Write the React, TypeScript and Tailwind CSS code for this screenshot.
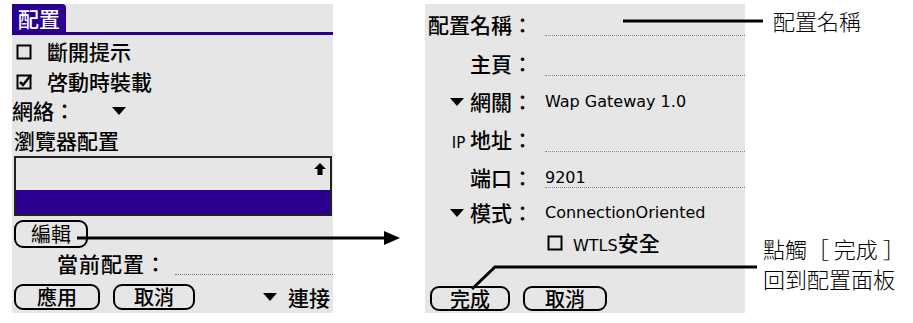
import React from "react";

const cjk = { fontFamily: '"Noto Sans CJK TC", "Noto Sans", sans-serif' };
const latin = { fontFamily: '"DejaVu Sans", "Noto Sans", sans-serif' };

function Tri() {
  return (
    <svg width="14" height="8" viewBox="0 0 14 8" className="shrink-0">
      <polygon points="0,0 14,0 7,8" fill="#000" />
    </svg>
  );
}

function Box({ checked }: { checked?: boolean }) {
  return (
    <svg width="16" height="16" viewBox="0 0 16 16" className="shrink-0">
      <rect x="1.5" y="1.5" width="13" height="13" fill="none" stroke="#000" strokeWidth="2" />
      {checked && <polyline points="4,8 7,11 15,1" fill="none" stroke="#000" strokeWidth="2.5" />}
    </svg>
  );
}

function PalmButton({ label, className }: { label: string; className: string }) {
  return (
    <div
      className={`flex items-center justify-center border-2 border-black rounded-[9px] text-[20px] leading-none text-black ${className}`}
    >
      {label}
    </div>
  );
}

export default function App() {
  return (
    <div className="relative w-[913px] h-[323px] bg-white overflow-hidden flex" style={cjk}>
      {/* LEFT: profile list */}
      <div className="ml-[12px] mt-[4px] w-[321px] h-[309px] bg-[#e6e6e6] flex flex-col text-black">
        <div className="h-[31px] border-b-[3px] border-[#2b0090] flex items-end">
          <div className="h-[28px] w-[54px] bg-[#2b0090] text-white text-[21px] leading-none flex items-center justify-center font-medium rounded-tr-[4px]">
            配置
          </div>
        </div>
        <div className="h-[30px] mt-[2px] flex items-center text-[21px] font-medium">
          <div className="w-[35px] pl-[4px]"><Box /></div>
          斷開提示
        </div>
        <div className="h-[29px] flex items-center text-[21px] font-medium">
          <div className="w-[35px] pl-[4px]"><Box checked /></div>
          啓動時裝載
        </div>
        <div className="h-[29px] flex items-center text-[21px] font-medium">
          <span className="w-[100px]">網絡：</span>
          <Tri />
        </div>
        <div className="h-[31px] flex items-center text-[21px] font-medium pl-[2px]">瀏覽器配置</div>
        <div className="h-[72px] ml-[2px] mr-[1px] border-2 border-[#222] flex flex-col">
          <div className="flex-1 flex justify-end pr-[4px] pt-[5px]">
            <svg width="12" height="12" viewBox="0 0 12 12">
              <polygon points="6,0 12,6 8.5,6 8.5,12 3.5,12 3.5,6 0,6" fill="#000" />
            </svg>
          </div>
          <div className="h-[24px] bg-[#2b0090]" />
        </div>
        <div className="mt-[4px] ml-[2px]">
          <PalmButton label="編輯" className="w-[74px] h-[28px]" />
        </div>
        <div className="h-[32px] flex items-center text-[21px] font-medium">
          <span className="w-[155px] text-right tracking-[1px]">當前配置：</span>
          <div className="flex-1 self-end mb-[5px] ml-[8px] border-b border-dotted border-[#777]" />
        </div>
        <div className="mt-[2px] flex items-center text-[21px] font-medium">
          <PalmButton label="應用" className="ml-[2px] w-[86px] h-[26px]" />
          <PalmButton label="取消" className="ml-[13px] w-[82px] h-[26px]" />
          <div className="ml-auto mr-[3px] flex items-center gap-[11px]">
            <Tri />
            <span>連接</span>
          </div>
        </div>
      </div>

      {/* RIGHT: profile details */}
      <div className="ml-[92px] mt-[4px] w-[320px] h-[309px] bg-[#e6e6e6] flex flex-col text-black text-[21px] font-medium">
        <div className="h-[38px] mt-[2px] flex items-center">
          <span className="w-[108px] text-right">配置名稱：</span>
          <div className="flex-1 self-end mb-[8px] ml-[12px] border-b border-dotted border-[#888]" />
        </div>
        <div className="h-[40px] flex items-center">
          <span className="w-[108px] text-right">主頁：</span>
          <div className="flex-1 self-end mb-[8px] ml-[12px] border-b border-dotted border-[#888]" />
        </div>
        <div className="h-[35px] flex items-center">
          <span className="w-[108px] flex items-center justify-end gap-[6px]"><Tri />網關：</span>
          <span className="ml-[12px] text-[16px] font-normal" style={latin}>Wap Gateway 1.0</span>
        </div>
        <div className="h-[41px] flex items-center">
          <span className="w-[108px] text-right">
            <span className="text-[15px]" style={latin}>IP</span> 地址：
          </span>
          <div className="flex-1 self-end mb-[8px] ml-[12px] border-b border-dotted border-[#888]" />
        </div>
        <div className="h-[36px] flex items-center">
          <span className="w-[108px] text-right">端口：</span>
          <span className="ml-[12px] flex-1 self-stretch flex items-center border-b border-dotted border-[#888] mb-[8px] pt-[8px] text-[16px] font-normal" style={latin}>
            9201
          </span>
        </div>
        <div className="h-[34px] flex items-center">
          <span className="w-[108px] flex items-center justify-end gap-[6px]"><Tri />模式：</span>
          <span className="ml-[12px] text-[16px] font-normal" style={latin}>ConnectionOriented</span>
        </div>
        <div className="h-[26px] flex items-center pl-[122px] gap-[10px]">
          <Box />
          <span><span className="text-[16px] font-normal" style={latin}>WTLS</span>安全</span>
        </div>
        <div className="mt-auto mb-[2px] flex items-center">
          <PalmButton label="完成" className="ml-[5px] w-[80px] h-[25px]" />
          <PalmButton label="取消" className="ml-[13px] w-[84px] h-[25px]" />
        </div>
      </div>

      {/* ANNOTATIONS */}
      <div className="ml-[18px] flex flex-col text-[22px] leading-[30px] text-black font-light">
        <div className="mt-[5px] ml-[10px]">配置名稱</div>
        <div className="mt-[198px]">點觸［ 完成 ］</div>
        <div>回到配置面板</div>
      </div>

      <svg className="absolute inset-0 pointer-events-none" width="913" height="323">
        <line x1="77" y1="238" x2="386" y2="238" stroke="#000" strokeWidth="3" />
        <polygon points="384,231 400,238 384,245" fill="#000" />
        <line x1="623" y1="21" x2="763" y2="21" stroke="#000" strokeWidth="3" />
        <polyline points="472,289 495,267 757,267" fill="none" stroke="#000" strokeWidth="3" />
      </svg>
    </div>
  );
}
